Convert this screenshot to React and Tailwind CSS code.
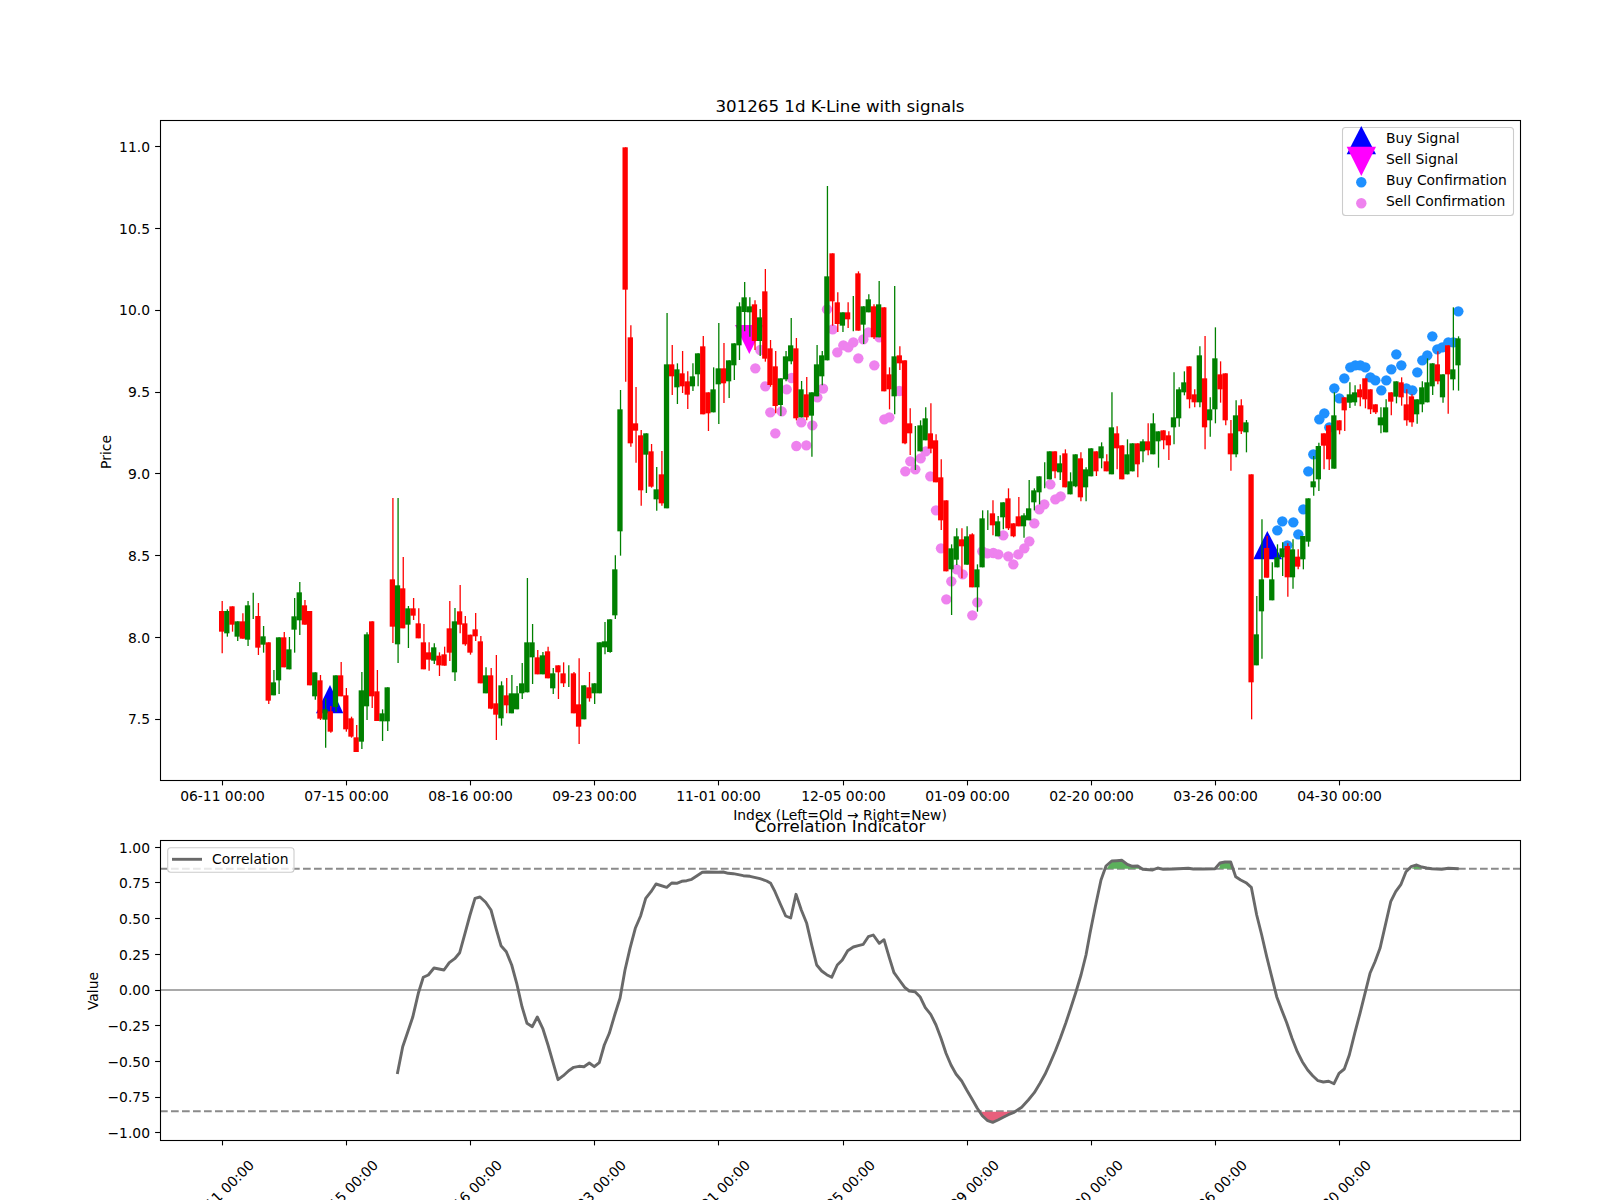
const DATES = ["06-11 00:00", "07-15 00:00", "08-16 00:00", "09-23 00:00", "11-01 00:00", "12-05 00:00", "01-09 00:00", "02-20 00:00", "03-26 00:00", "04-30 00:00"];
const TICK_X = [222.5, 346.5, 470.5, 594.5, 718.5, 843.5, 967.5, 1091.5, 1215.5, 1339.5];
const PRICE_TICKS = ["7.5", "8.0", "8.5", "9.0", "9.5", "10.0", "10.5", "11.0"];
const VALUE_TICKS = [1, 0.75, 0.5, 0.25, 0, -0.25, -0.5, -0.75, -1];

const RED = "#ff0000";
const GREEN = "#008000";

// rows are [r|g, body top, body bottom, wick top, wick bottom], read off 3x crops
const rows = (y0, list) =>
  list.map(([c, bt, bb, wt, wb]) => ({
    color: c === "r" ? RED : GREEN,
    bodyTop: y0 + bt / 3,
    bodyBottom: y0 + bb / 3,
    wickTop: y0 + wt / 3,
    wickBottom: y0 + wb / 3,
  }));

const candles = [
  ...rows(400, [
    ["r", 633, 695, 603, 760], ["g", 633, 700, 628, 710], ["r", 619, 674, 619, 695], ["g", 664, 710, 664, 723],
    ["r", 664, 716, 640, 716], ["g", 616, 719, 603, 738], ["g", 655, 655, 578, 657], ["r", 648, 743, 609, 765],
    ["g", 709, 734, 678, 758], ["r", 727, 902, 727, 912], ["g", 847, 886, 810, 886], ["g", 712, 841, 712, 882],
    ["r", 712, 802, 696, 802], ["g", 748, 808, 711, 808], ["g", 649, 689, 594, 758], ["g", 577, 661, 546, 705],
    ["r", 616, 674, 600, 674], ["r", 633, 856, 633, 856], ["g", 817, 889, 817, 899], ["r", 841, 956, 825, 960],
    ["g", 928, 959, 895, 1043], ["r", 934, 995, 918, 998], ["g", 826, 921, 826, 936], ["r", 826, 889, 786, 889],
    ["r", 886, 988, 864, 995], ["r", 955, 1010, 950, 1013], ["r", 1012, 1056, 975, 1056], ["g", 871, 1025, 816, 1047],
    ["g", 703, 919, 697, 960], ["r", 664, 889, 664, 924], ["r", 874, 963, 810, 963], ["g", 940, 964, 928, 1023],
    ["g", 862, 964, 862, 993], ["r", 538, 680, 294, 729], ["g", 556, 733, 294, 789], ["r", 565, 685, 471, 685],
    ["g", 625, 674, 618, 744], ["r", 625, 647, 594, 660], ["r", 670, 715, 625, 715], ["r", 727, 808, 672, 808],
    ["r", 757, 779, 727, 812], ["g", 742, 782, 730, 792], ["r", 767, 796, 757, 828],
  ]),
  ...rows(500, [
    ["r", 463, 497, 440, 497], ["r", 385, 458, 303, 483], ["g", 364, 517, 324, 543], ["r", 334, 374, 255, 400],
    ["r", 370, 433, 348, 437], ["r", 404, 458, 404, 464], ["r", 388, 409, 339, 423], ["r", 424, 550, 408, 550],
    ["g", 526, 580, 502, 580], ["r", 526, 626, 504, 628], ["r", 610, 644, 465, 720], ["g", 556, 655, 544, 677],
    ["r", 586, 616, 534, 640], ["g", 580, 640, 525, 640], ["g", 580, 628, 558, 628], ["g", 550, 580, 489, 597],
    ["g", 427, 577, 234, 577], ["g", 427, 472, 372, 552], ["r", 472, 523, 450, 523], ["g", 466, 523, 456, 523],
    ["r", 454, 535, 440, 535], ["g", 520, 565, 504, 582], ["r", 496, 517, 496, 597], ["r", 520, 550, 487, 561],
    ["g", 520, 520, 496, 561], ["r", 520, 640, 516, 640], ["r", 613, 680, 475, 732], ["g", 556, 658, 556, 658],
    ["r", 562, 595, 516, 605], ["g", 550, 580, 550, 612], ["g", 427, 580, 427, 580], ["g", 424, 442, 366, 463],
    ["g", 358, 456, 358, 458], ["g", 208, 346, 166, 357],
  ]),
  ...rows(130, [
    ["g", 838, 1204, 780, 1277], ["r", 52, 479, 52, 755], ["r", 622, 940, 586, 950], ["r", 880, 902, 771, 998],
    ["r", 916, 1081, 900, 1127], ["g", 910, 974, 910, 1089], ["r", 964, 1070, 942, 1073], ["g", 1078, 1108, 1011, 1142],
    ["r", 1033, 1120, 963, 1127], ["g", 703, 1135, 549, 1135], ["r", 703, 739, 645, 795], ["g", 718, 772, 700, 822],
    ["r", 730, 769, 663, 789], ["r", 754, 794, 724, 837], ["g", 739, 769, 700, 783], ["g", 670, 733, 670, 769],
    ["r", 649, 853, 618, 853], ["r", 787, 850, 787, 903], ["g", 778, 847, 712, 847], ["g", 715, 763, 579, 882],
    ["r", 715, 760, 639, 819], ["g", 691, 754, 691, 804], ["g", 640, 706, 640, 750],
  ]),
  ...rows(160, [
    ["g", 439, 556, 427, 600], ["g", 412, 456, 366, 514], ["g", 439, 457, 412, 530], ["r", 433, 543, 421, 570],
    ["g", 472, 543, 447, 588], ["r", 394, 596, 327, 605], ["r", 565, 675, 540, 680], ["r", 619, 738, 573, 760],
    ["g", 655, 735, 655, 768], ["g", 589, 658, 573, 664], ["g", 556, 604, 474, 613], ["r", 565, 775, 534, 781],
    ["g", 688, 772, 663, 772], ["r", 703, 772, 651, 781], ["g", 697, 767, 697, 890], ["g", 613, 709, 555, 709],
    ["g", 586, 649, 573, 676], ["g", 349, 601, 78, 601], ["r", 280, 424, 280, 497], ["r", 427, 492, 397, 516],
    ["g", 457, 497, 457, 516], ["r", 457, 478, 427, 504], ["g", 460, 460, 408, 514], ["r", 340, 512, 334, 512],
    ["g", 439, 494, 439, 552], ["g", 418, 457, 403, 457], ["r", 439, 532, 433, 537], ["g", 433, 532, 363, 532],
    ["r", 442, 694, 442, 694], ["r", 643, 688, 622, 748], ["g", 589, 709, 378, 763], ["r", 586, 610, 559, 630],
    ["r", 601, 850, 601, 853],
  ]),
  ...rows(380, [
    ["r", 130, 160, 85, 225], ["g", 200, 200, 138, 270], ["g", 136, 214, 121, 214], ["g", 115, 181, 82, 181],
    ["r", 160, 206, 70, 220], ["r", 181, 307, 163, 307], ["r", 292, 421, 238, 450], ["r", 361, 574, 361, 574],
    ["g", 505, 568, 493, 705], ["g", 469, 539, 445, 555], ["r", 478, 499, 445, 595], ["g", 469, 554, 439, 554],
    ["r", 463, 622, 460, 622], ["g", 568, 622, 553, 695], ["g", 415, 562, 391, 562], ["g", 420, 420, 391, 450],
    ["r", 400, 436, 361, 466], ["g", 424, 469, 408, 469], ["g", 367, 412, 367, 448], ["r", 355, 445, 325, 450],
    ["r", 430, 469, 430, 472], ["r", 409, 439, 351, 439], ["g", 406, 439, 400, 473], ["g", 385, 421, 300, 421],
    ["g", 331, 367, 325, 391], ["g", 289, 337, 289, 373], ["g", 290, 290, 247, 325], ["g", 214, 298, 214, 298],
    ["r", 214, 274, 214, 295], ["g", 250, 277, 226, 300], ["r", 220, 322, 208, 322], ["g", 304, 343, 277, 343],
    ["g", 223, 319, 223, 322], ["r", 235, 352, 217, 364], ["g", 268, 322, 262, 364], ["g", 205, 289, 205, 289],
    ["r", 214, 274, 214, 288], ["g", 199, 235, 187, 265], ["r", 244, 274, 223, 274], ["g", 142, 283, 37, 283],
    ["r", 160, 205, 139, 268],
  ]),
  ...rows(280, [
    ["r", 496, 598, 496, 598], ["g", 523, 583, 478, 583], ["g", 490, 574, 490, 574], ["r", 490, 553, 490, 592],
    ["g", 484, 514, 478, 547], ["r", 484, 511, 430, 526], ["g", 430, 523, 400, 523], ["g", 454, 484, 454, 563],
    ["r", 451, 481, 451, 508], ["r", 466, 496, 454, 540], ["g", 412, 442, 277, 493], ["g", 328, 415, 322, 440],
    ["g", 307, 337, 274, 346], ["r", 259, 358, 259, 385], ["r", 343, 367, 328, 382], ["g", 226, 367, 199, 382],
    ["r", 295, 442, 168, 508], ["g", 388, 421, 352, 470], ["g", 235, 388, 142, 430], ["r", 283, 328, 244, 368],
    ["r", 280, 421, 280, 436], ["r", 460, 523, 420, 572], ["g", 406, 523, 361, 532], ["r", 376, 454, 358, 462],
    ["g", 427, 457, 420, 517], ["r", 583, 1207, 583, 1318], ["g", 1063, 1156, 948, 1156], ["g", 898, 994, 718, 1136],
    ["r", 804, 893, 768, 893], ["g", 898, 961, 847, 961], ["g", 832, 862, 793, 862], ["g", 805, 832, 787, 888],
    ["r", 798, 892, 790, 950], ["g", 808, 892, 778, 926],
  ]),
  ...rows(110, [
    ["r", 1340, 1370, 1318, 1378], ["g", 1278, 1348, 1278, 1378], ["g", 1165, 1295, 1165, 1310], ["g", 1114, 1132, 1038, 1157],
    ["g", 1008, 1108, 998, 1143], ["r", 970, 1007, 970, 1078], ["r", 946, 1048, 946, 1080], ["g", 916, 1076, 847, 1076],
    ["r", 931, 961, 931, 973], ["r", 862, 901, 862, 963], ["g", 853, 878, 817, 894], ["g", 847, 877, 826, 887],
    ["r", 838, 862, 823, 889], ["r", 805, 868, 805, 895], ["r", 838, 898, 838, 912], ["r", 883, 907, 883, 912],
    ["g", 922, 946, 892, 970], ["g", 892, 967, 868, 967], ["r", 847, 875, 847, 916], ["g", 814, 860, 814, 880],
    ["r", 817, 862, 802, 887], ["r", 883, 931, 838, 947], ["r", 859, 937, 853, 950], ["g", 868, 913, 868, 941],
    ["g", 832, 883, 814, 907], ["g", 817, 877, 745, 877], ["g", 760, 829, 760, 855], ["r", 763, 814, 724, 823],
    ["g", 793, 862, 793, 878], ["r", 706, 793, 706, 911], ["g", 778, 808, 592, 841], ["g", 685, 766, 679, 842],
  ]),
];

const at = (x0, y0, list) => list.map(([x, y]) => [x0 + x / 3, y0 + y / 3]);

const sellDots = [
  ...at(700, 160, [[166, 625], [181, 570], [196, 679], [211, 757], [226, 820], [245, 754], [260, 688], [275, 654], [289, 858], [304, 787], [319, 856], [337, 796], [352, 712], [369, 686], [381, 448], [398, 508], [412, 577], [430, 556], [445, 562], [460, 547], [475, 595], [490, 538], [505, 517], [523, 616], [538, 532]]),
  ...at(850, 380, [[103, 118], [118, 112], [148, 33], [166, 274], [181, 244], [196, 268], [212, 235], [227, 214], [241, 289], [258, 391], [273, 505], [289, 658], [304, 604], [320, 568], [338, 583], [367, 706], [382, 667], [397, 514], [412, 520], [430, 519], [445, 523], [460, 466], [475, 529], [490, 553], [505, 523], [523, 505], [538, 484], [553, 430], [568, 388], [583, 373], [601, 313], [616, 358], [632, 349]]),
];

const buyDots = at(1260, 110, [[37, 1328], [52, 1261], [67, 1234], [82, 1306], [100, 1237], [115, 1273], [130, 1198], [145, 1084], [160, 1033], [178, 928], [193, 910], [208, 952], [223, 835], [238, 865], [253, 805], [271, 772], [286, 766], [301, 766], [316, 772], [331, 802], [346, 811], [364, 841], [379, 811], [394, 778], [409, 733], [424, 766], [439, 835], [457, 841], [472, 787], [487, 751], [502, 736], [517, 679], [532, 718], [547, 712], [565, 697], [580, 697], [595, 604]]);

const pts = (list) => list.map(([x, y]) => `${x.toFixed(1)},${y.toFixed(1)}`).join(" ");

const correlation = [
  ...at(90, 770, [[922, 912], [938, 830], [952, 790], [968, 742], [985, 670], [1000, 622], [1015, 615], [1032, 594], [1062, 600], [1078, 578], [1094, 566], [1109, 548], [1125, 490], [1140, 435], [1155, 385], [1170, 381], [1187, 397], [1203, 420], [1218, 475], [1233, 527], [1249, 545], [1265, 585], [1280, 640], [1296, 710], [1311, 760], [1327, 770], [1342, 741], [1358, 775], [1374, 825], [1390, 880], [1404, 929], [1420, 917], [1436, 902], [1451, 892], [1467, 889], [1482, 890]]),
  ...at(590, 770, [[-2, 879], [13, 890], [28, 878], [43, 825], [58, 790], [74, 735], [90, 685], [105, 600], [120, 535], [136, 475], [152, 437], [167, 385], [183, 365], [198, 342], [230, 352], [245, 339], [260, 340], [275, 334], [290, 332], [305, 328], [320, 318], [337, 307], [350, 306], [385, 307], [400, 306], [415, 310], [430, 311], [460, 317], [480, 319], [510, 326], [530, 333], [542, 340], [555, 365], [570, 400], [587, 438], [602, 444], [618, 373], [634, 420], [650, 460], [665, 525], [680, 585], [695, 603], [710, 614], [725, 622], [742, 585], [757, 570], [773, 542], [790, 531], [805, 527], [820, 523], [835, 500], [850, 495], [868, 520], [882, 509], [897, 560], [912, 608], [928, 630], [944, 652], [958, 663], [975, 665], [990, 680], [1006, 713], [1022, 733], [1038, 765], [1053, 805], [1068, 850], [1083, 885], [1098, 912], [1115, 933], [1130, 960], [1146, 987], [1162, 1015], [1177, 1037], [1193, 1052], [1208, 1057], [1224, 1050], [1240, 1042], [1255, 1034], [1270, 1028], [1295, 1012], [1315, 990], [1333, 968], [1350, 940], [1365, 913], [1380, 880], [1396, 843], [1411, 805], [1427, 760], [1442, 715], [1458, 665], [1473, 615], [1488, 555]]),
  ...at(1090, 770, [[0, 490], [16, 410], [33, 330], [48, 288], [65, 273], [80, 272], [96, 271], [112, 283], [127, 289], [143, 288], [158, 298], [188, 300], [203, 294], [220, 298], [250, 297], [295, 295], [310, 297], [340, 297], [375, 296], [390, 279], [405, 276], [422, 276], [437, 320], [452, 330], [468, 338], [484, 352], [500, 435], [515, 495], [530, 560], [545, 620], [560, 680], [575, 720], [590, 758], [606, 805], [622, 845], [637, 875], [653, 900], [668, 917], [684, 932], [700, 936], [716, 934], [732, 941], [747, 910], [763, 897], [778, 855], [794, 790], [810, 730], [825, 670], [840, 610], [855, 575], [870, 535], [885, 470], [902, 395], [917, 365], [933, 343], [948, 305], [963, 290], [980, 285], [995, 291], [1010, 294], [1025, 296], [1055, 298], [1075, 295], [1106, 296]]),
];

const redFill = at(590, 770, [[1175, 1025], [1270, 1025], [1240, 1042], [1208, 1057], [1193, 1052], [1177, 1037]]);
const greenFills = [
  at(1090, 770, [[50, 296], [65, 273], [96, 271], [112, 283], [127, 289], [143, 288], [158, 296]]),
  at(1090, 770, [[388, 296], [390, 279], [422, 276], [428, 296]]),
  at(1090, 770, [[965, 296], [980, 285], [995, 296]]),
];

const candleX = (i) => 222.2 + 5.173 * i;
const priceY = (p) => 719.3 - (p - 7.5) * 163.6;
const valueY = (v) => 990 - 142.7 * v;
const snap = (y) => Math.floor(y) + 0.5;
const formatValue = (v) => (v < 0 ? "\u2212" : "") + Math.abs(v).toFixed(2);

const KLinePanel = () => (
  <svg className="block" width="1600" height="822" viewBox="0 0 1600 822">
    <text x="840" y="111.7" textAnchor="middle" className="text-[16.67px]">
      301265 1d K-Line with signals
    </text>

    {sellDots.map(([x, y], i) => (
      <circle key={i} cx={x} cy={y} r="5.2" fill="#ee82ee" />
    ))}
    {buyDots.map(([x, y], i) => (
      <circle key={i} cx={x} cy={y} r="5.2" fill="#1e90ff" />
    ))}
    <polygon points="330,685 316,713.3 343.3,713.3" fill="#0000ff" />
    <polygon points="1267.3,531 1253.3,559.3 1282,559.3" fill="#0000ff" />
    <polygon points="735,325 763.5,325 749.3,354" fill="#ff00ff" />

    {candles.map((c, i) => (
      <g key={i}>
        <line x1={candleX(i)} x2={candleX(i)} y1={c.wickTop} y2={c.wickBottom} stroke={c.color} strokeWidth="1.3" />
        <rect x={candleX(i) - 3.2} y={c.bodyTop} width="5.3" height={c.bodyBottom - c.bodyTop} fill={c.color} />
      </g>
    ))}

    <rect x="160.5" y="120.5" width="1360" height="660" fill="none" stroke="#000" strokeWidth="1.1" />
    {PRICE_TICKS.map((p) => (
      <g key={p}>
        <line x1="155.1" x2="160" y1={snap(priceY(+p))} y2={snap(priceY(+p))} stroke="#000" strokeWidth="1.1" />
        <text x="150" y={priceY(+p) + 5} textAnchor="end">
          {p}
        </text>
      </g>
    ))}
    {DATES.map((d, i) => (
      <g key={d}>
        <line x1={TICK_X[i]} x2={TICK_X[i]} y1="781" y2="785.4" stroke="#000" strokeWidth="1.1" />
        <text x={TICK_X[i]} y="800.5" textAnchor="middle">
          {d}
        </text>
      </g>
    ))}
    <text transform="translate(111 452) rotate(-90)" textAnchor="middle">
      Price
    </text>
    <text x="840" y="820" textAnchor="middle">
      Index (Left=Old → Right=New)
    </text>

    <rect x="1342.5" y="127.5" width="171" height="88" rx="3" fill="#ffffff" fillOpacity="0.8" stroke="#cccccc" strokeWidth="1.1" />
    <polygon points="1361.3,126 1346.7,154.3 1376,154.3" fill="#0000ff" />
    <polygon points="1346.7,146.7 1376,146.7 1361.3,176" fill="#ff00ff" />
    <circle cx="1361.3" cy="182.3" r="5.2" fill="#1e90ff" />
    <circle cx="1361.3" cy="203.3" r="5.2" fill="#ee82ee" />
    <text x="1386" y="143.3">Buy Signal</text>
    <text x="1386" y="164.3">Sell Signal</text>
    <text x="1386" y="185.3">Buy Confirmation</text>
    <text x="1386" y="206.3">Sell Confirmation</text>
  </svg>
);

const CorrelationPanel = () => (
  <svg className="block overflow-visible" width="1600" height="378" viewBox="0 822 1600 378">
    <text x="840" y="832" textAnchor="middle" className="text-[16.67px]">
      Correlation Indicator
    </text>

    <line x1="160" x2="1520" y1={valueY(0)} y2={valueY(0)} stroke="#a9a9a9" strokeWidth="1.8" />
    {[0.85, -0.85].map((v) => (
      <line key={v} x1="160" x2="1520" y1={valueY(v)} y2={valueY(v)} stroke="#8a8a8a" strokeWidth="2" strokeDasharray="7.7 3.3" />
    ))}
    {greenFills.map((f, i) => (
      <polygon key={i} points={pts(f)} fill="#5cb05c" />
    ))}
    <polygon points={pts(redFill)} fill="#e85f7c" />
    <polyline points={pts(correlation)} fill="none" stroke="#696969" strokeWidth="2.9" strokeLinejoin="round" />

    <rect x="160.5" y="840.5" width="1360" height="300" fill="none" stroke="#000" strokeWidth="1.1" />
    {VALUE_TICKS.map((v) => (
      <g key={v}>
        <line x1="155.1" x2="160" y1={snap(valueY(v))} y2={snap(valueY(v))} stroke="#000" strokeWidth="1.1" />
        <text x="150" y={valueY(v) + 5.4} textAnchor="end">
          {formatValue(v)}
        </text>
      </g>
    ))}
    {DATES.map((d, i) => (
      <g key={d}>
        <line x1={TICK_X[i]} x2={TICK_X[i]} y1="1141" y2="1145.4" stroke="#000" strokeWidth="1.1" />
        <text transform={`translate(${TICK_X[i] - 1} 1192.5) rotate(-45)`} textAnchor="middle" dominantBaseline="central">
          {d}
        </text>
      </g>
    ))}
    <text transform="translate(98 991) rotate(-90)" textAnchor="middle">
      Value
    </text>

    <rect x="167.7" y="847.7" width="126.3" height="24.6" rx="3" fill="#ffffff" fillOpacity="0.8" stroke="#cccccc" strokeWidth="1.1" />
    <line x1="172" x2="202" y1="859.3" y2="859.3" stroke="#696969" strokeWidth="2.9" />
    <text x="212" y="864.3">Correlation</text>
  </svg>
);

export default function App() {
  return (
    <div className="flex flex-col w-[1600px] h-[1200px] overflow-hidden bg-white font-['DejaVu_Sans',sans-serif] text-[13.89px]">
      <KLinePanel />
      <CorrelationPanel />
    </div>
  );
}
